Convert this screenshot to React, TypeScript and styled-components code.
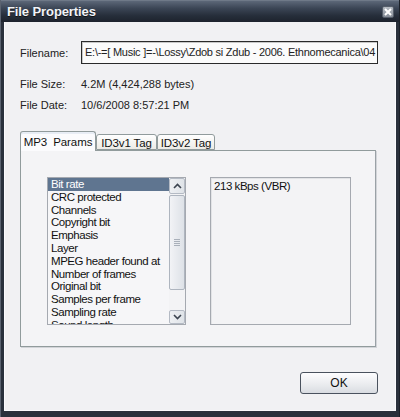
import React from 'react'
import styled, { createGlobalStyle } from 'styled-components'

const GlobalStyle = createGlobalStyle`
  html, body {
    margin: 0;
    padding: 0;
    background: #2a313c;
  }
  body {
    font-family: "Liberation Sans", Arial, sans-serif;
  }
`

const fields = [
  'Bit rate',
  'CRC protected',
  'Channels',
  'Copyright bit',
  'Emphasis',
  'Layer',
  'MPEG header found at',
  'Number of frames',
  'Original bit',
  'Samples per frame',
  'Sampling rate',
  'Sound length',
]

const tabs = ['MP3  Params', 'ID3v1 Tag', 'ID3v2 Tag']

const Chevron = ({ up }) => (
  <svg width="9" height="6" viewBox="0 0 9 6">
    <polyline
      points={up ? '1,5 4.5,1.5 8,5' : '1,1 4.5,4.5 8,1'}
      fill="none"
      stroke="#3c4450"
      strokeWidth="1.6"
    />
  </svg>
)

const App = () => {
  const selected = 0
  return (
    <Window>
      <GlobalStyle />
      <TitleBar>
        <Title>File Properties</Title>
        <CloseButton>
          <svg width="8" height="8" viewBox="0 0 8 8">
            <path d="M1 1 L7 7 M7 1 L1 7" stroke="#fff" strokeWidth="2" />
          </svg>
        </CloseButton>
      </TitleBar>
      <Client>
        <FileRow>
          <Label>Filename:</Label>
          <PathBox>E:\-=[ Music ]=-\Lossy\Zdob si Zdub - 2006. Ethnomecanica\04 - Zdob si Zdub - Ethnomecanica.mp3</PathBox>
        </FileRow>
        <InfoRow $top={13}>
          <Label>File Size:</Label>
          <Value>4.2M (4,424,288 bytes)</Value>
        </InfoRow>
        <InfoRow $top={7}>
          <Label>File Date:</Label>
          <Value>10/6/2008 8:57:21 PM</Value>
        </InfoRow>
        <TabStrip>
          {tabs.map((t, i) => (
            <Tab key={t} $active={i === selected} $width={[76, 61, 58][i]}>
              {t}
            </Tab>
          ))}
        </TabStrip>
        <Panel>
          <ListBox>
            <Items>
              {fields.map((f, i) => (
                <Item key={f} $selected={i === 0}>
                  {f}
                </Item>
              ))}
            </Items>
            <ScrollBar>
              <ScrollButton $height={16}>
                <Chevron up />
              </ScrollButton>
              <Track>
                <Thumb>
                  <Grip />
                  <Grip />
                  <Grip />
                  <Grip />
                </Thumb>
              </Track>
              <ScrollButton $height={14}>
                <Chevron />
              </ScrollButton>
            </ScrollBar>
          </ListBox>
          <ValueBox>213 kBps (VBR)</ValueBox>
        </Panel>
        <Footer>
          <OkButton>OK</OkButton>
        </Footer>
      </Client>
    </Window>
  )
}

const Window = styled.div`
  width: 400px;
  height: 417px;
  display: flex;
  flex-direction: column;
  background: #2a313c;
  box-sizing: border-box;
  border-left: 1px solid #5b6370;
  border-right: 1px solid #1c2129;
`

const TitleBar = styled.div`
  height: 22px;
  flex: none;
  display: flex;
  align-items: center;
  justify-content: space-between;
  padding: 0 5px 0 6px;
  background: linear-gradient(#5c6778 0%, #3b4555 35%, #262e3a 70%, #1d232d 100%);
  border-top: 1px solid #6f7988;
  box-sizing: border-box;
`

const Title = styled.div`
  color: #f2f4f8;
  font-size: 13px;
  font-weight: bold;
  text-shadow: 0 1px 0 #111;
  letter-spacing: -0.1px;
`

const CloseButton = styled.div`
  width: 12px;
  height: 12px;
  border-radius: 2px;
  display: flex;
  align-items: center;
  justify-content: center;
  background: linear-gradient(#b5bac2, #868d98);
  border: 1px solid #555d69;
  box-sizing: border-box;
`

const Client = styled.div`
  flex: 1;
  margin: 0 3px 6px 3px;
  background: #f1f1f3;
  border: 1px solid #fbfbfd;
  border-top: none;
  padding: 19px 17px 16px 15px;
  display: flex;
  flex-direction: column;
  font-size: 11px;
  color: #111;
`

const FileRow = styled.div`
  display: flex;
  align-items: center;
  height: 23px;
`

const InfoRow = styled.div`
  display: flex;
  align-items: center;
  height: 14px;
  margin-top: ${p => p.$top}px;
`

const Label = styled.div`
  width: 61px;
  flex: none;
  color: #222;
`

const Value = styled.div`
  color: #222;
`

const PathBox = styled.div`
  flex: 1;
  height: 23px;
  box-sizing: border-box;
  border: 1px solid #2a2a2a;
  box-shadow: inset 1px 1px 0 #c8c8c8;
  background: #fbfbfb;
  padding: 4px 2px 0 3px;
  white-space: nowrap;
  overflow: hidden;
  letter-spacing: -0.25px;
  color: #222;
`

const TabStrip = styled.div`
  display: flex;
  align-items: flex-end;
  margin-top: 19px;
  height: 19px;
  position: relative;
  z-index: 1;
`

const Tab = styled.div`
  width: ${p => p.$width}px;
  box-sizing: border-box;
  height: ${p => (p.$active ? 20 : 16)}px;
  margin-bottom: ${p => (p.$active ? -1 : 0)}px;
  border: 1px solid #919b9c;
  border-bottom: ${p => (p.$active ? 'none' : '1px solid #919b9c')};
  border-radius: 3px 3px 0 0;
  background: ${p => (p.$active ? '#fbfbfd' : 'linear-gradient(#ffffff, #ecebe6)')};
  box-shadow: ${p => (p.$active ? 'inset 0 2px 0 #e8edf5' : 'none')};
  display: flex;
  align-items: center;
  justify-content: center;
  font-size: 11.5px;
  letter-spacing: -0.1px;
  white-space: pre;
  padding-top: ${p => (p.$active ? 0 : 1)}px;
  color: #111;
`

const Panel = styled.div`
  height: 197px;
  margin-right: 2px;
  box-sizing: border-box;
  border: 1px solid #919b9c;
  border-right-color: #9aa1a6;
  box-shadow: 1px 1px 0 #d2d4d8;
  background: #f4f4f6;
  padding: 26px 26px 0 26px;
  display: flex;
  gap: 24px;
  align-items: flex-start;
`

const ListBox = styled.div`
  width: 139px;
  height: 148px;
  flex: none;
  box-sizing: border-box;
  border: 1px solid #a5a9b0;
  background: #f6f6f8;
  display: flex;
  overflow: hidden;
`

const Items = styled.div`
  flex: 1;
  overflow: hidden;
  font-size: 11.5px;
  letter-spacing: -0.45px;
`

const Item = styled.div`
  height: 12.8px;
  line-height: 13px;
  padding-left: 3px;
  white-space: nowrap;
  overflow: hidden;
  color: ${p => (p.$selected ? '#fff' : '#111')};
  background: ${p => (p.$selected ? '#5f7590' : 'transparent')};
`

const ScrollBar = styled.div`
  width: 16px;
  flex: none;
  display: flex;
  flex-direction: column;
  background: #f3f3f5;
`

const ScrollButton = styled.div`
  height: ${p => p.$height}px;
  flex: none;
  box-sizing: border-box;
  border: 1px solid #b4bac4;
  border-radius: 2px;
  background: linear-gradient(90deg, #eef0f3, #dfe3e8);
  display: flex;
  align-items: center;
  justify-content: center;
`

const Track = styled.div`
  flex: 1;
  padding: 1px 0 20px;
  display: flex;
`

const Thumb = styled.div`
  flex: 1;
  box-sizing: border-box;
  border: 1px solid #aeb5bf;
  border-radius: 2px;
  background: linear-gradient(90deg, #f2f3f6, #dde1e7);
  display: flex;
  flex-direction: column;
  align-items: center;
  justify-content: center;
  gap: 1px;
`

const Grip = styled.div`
  width: 6px;
  height: 1px;
  background: #a9b0ba;
`

const ValueBox = styled.div`
  width: 141px;
  height: 148px;
  flex: none;
  box-sizing: border-box;
  border: 1px solid #a5a9b0;
  box-shadow: inset 1px 1px 0 #e2e3e6;
  background: #f3f3f5;
  padding: 2px 3px;
  font-size: 11.5px;
  letter-spacing: -0.45px;
  color: #111;
`

const Footer = styled.div`
  flex: 1;
  display: flex;
  justify-content: flex-end;
  align-items: flex-end;
`

const OkButton = styled.div`
  width: 78px;
  height: 22px;
  box-sizing: border-box;
  border: 1px solid #4a525e;
  border-radius: 3px;
  background: linear-gradient(#fdfdfe, #e9ebee 60%, #d9dce1);
  display: flex;
  align-items: center;
  justify-content: center;
  font-size: 12px;
  color: #111;
`

export default App
